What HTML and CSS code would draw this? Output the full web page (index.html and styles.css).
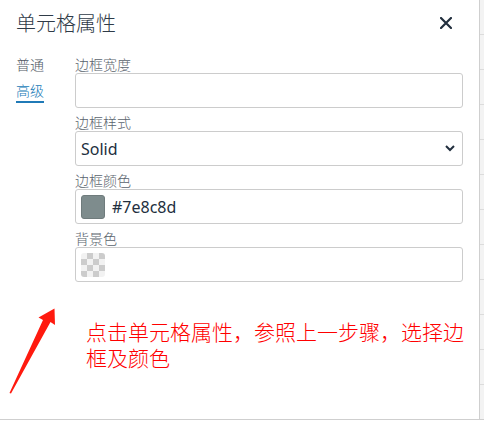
FILE: index.html
```html
<!DOCTYPE html>
<html lang="zh-CN">
<head>
<meta charset="utf-8">
<title>单元格属性</title>
<link rel="stylesheet" href="styles.css">
</head>
<body>
<div class="page">
  <div class="dialog">
    <header class="dlg-head">
      <h1 class="dlg-title">单元格属性</h1>
      <button class="dlg-close" type="button" aria-label="关闭">
        <svg width="12" height="12" viewBox="0 0 12 12"><path d="M1 1 L11 11 M11 1 L1 11" stroke="#222f3e" stroke-width="2.2" stroke-linecap="round" fill="none"/></svg>
      </button>
    </header>
    <div class="dlg-body">
      <nav class="tabs">
        <span class="tab">普通</span>
        <span class="tab tab-active">高级</span>
      </nav>
      <div class="form">
        <div class="field">
          <label class="label">边框宽度</label>
          <div class="input"></div>
        </div>
        <div class="field">
          <label class="label">边框样式</label>
          <div class="input select">
            <span class="value">Solid</span>
            <svg class="chev" width="10" height="7" viewBox="0 0 10 7"><path d="M1 1 L5 5 L9 1" stroke="#222f3e" stroke-width="2" fill="none"/></svg>
          </div>
        </div>
        <div class="field">
          <label class="label">边框颜色</label>
          <div class="input color">
            <span class="swatch swatch-grey"></span>
            <span class="value">#7e8c8d</span>
          </div>
        </div>
        <div class="field">
          <label class="label">背景色</label>
          <div class="input color">
            <span class="swatch swatch-empty"></span>
          </div>
        </div>
      </div>
    </div>
    <div class="note">
      <svg class="arrow" width="60" height="100" viewBox="0 0 60 100">
        <polygon points="54.5,8.5 55,25 50.5,22 11,93.5 9.5,93 43,20 38.5,17.5" fill="#ff1a0f"/>
      </svg>
      <p class="note-text">点击单元格属性，参照上一步骤，选择边框及颜色</p>
    </div>
  </div>
  <div class="strip"></div>
</div>
</body>
</html>
```
FILE: styles.css
```css
* { box-sizing: border-box; }
html, body { margin: 0; padding: 0; background: #fff; }
body {
  font-family: "Noto Sans", "Noto Sans CJK SC", sans-serif;
  color: #222f3e;
}
.page {
  display: flex;
  width: 484px;
  height: 421px;
  overflow: hidden;
}
.dialog {
  width: 480px;
  height: 420px;
  background: #fff;
  border-right: 1px solid #cfcfcf;
  border-bottom: 1px solid #cfcfcf;
  display: flex;
  flex-direction: column;
}
.strip {
  flex: 1;
  height: 420px;
  background: repeating-linear-gradient(to bottom, #f3f3f3 0 34px, #dcdcdc 34px 35px);
  border-bottom: 1px solid #cfcfcf;
}
.dlg-head {
  display: flex;
  align-items: center;
  justify-content: space-between;
  padding: 8px 21px 0 16px;
}
.dlg-title {
  margin: 0;
  font-family: "Noto Sans CJK SC", sans-serif;
  font-weight: 300;
  font-size: 20px;
  line-height: 30px;
  color: #2f3b48;
}
.dlg-close {
  width: 24px;
  height: 24px;
  padding: 0;
  border: 0;
  background: none;
  display: flex;
  align-items: center;
  justify-content: center;
}
.dlg-body {
  display: flex;
  padding: 17px 16px 0 16px;
}
.tabs {
  width: 59px;
  display: flex;
  flex-direction: column;
  align-items: flex-start;
}
.tab {
  font-family: "Noto Sans CJK SC", sans-serif;
  font-weight: 300;
  font-size: 14px;
  line-height: 18px;
  color: #4f5963;
  padding-bottom: 2px;
  border-bottom: 2px solid transparent;
  margin-bottom: 4px;
}
.tab-active {
  color: #207ab7;
  border-bottom-color: #207ab7;
}
.form {
  flex: 1;
  display: flex;
  flex-direction: column;
}
.field {
  display: flex;
  flex-direction: column;
  margin-bottom: 5px;
}
.label {
  font-family: "Noto Sans CJK SC", sans-serif;
  font-weight: 300;
  font-size: 14px;
  line-height: 18px;
  color: #5a636d;
}
.input {
  height: 35px;
  border: 1px solid #cccccc;
  border-radius: 3px;
  background: #fff;
  display: flex;
  align-items: center;
  padding: 0 5px;
}
.value {
  font-family: "Noto Sans", sans-serif;
  font-size: 16px;
  color: #222f3e;
}
.select { justify-content: space-between; padding-right: 7px; }
.color .value { margin-left: 7px; }
.swatch {
  width: 24px;
  height: 24px;
  border-radius: 3px;
  display: block;
}
.swatch-grey {
  background: #7e8c8d;
  border: 1px solid #6f7b7c;
}
.swatch-empty {
  background: repeating-conic-gradient(#cccccc 0 25%, #f2f2f2 0 50%) 0 0 / 12px 12px;
}
.note {
  display: flex;
  align-items: flex-start;
  margin-top: 13px;
}
.arrow { display: block; flex: none; }
.note-text {
  margin: 18px 0 0 26px;
  width: 384px;
  font-family: "Noto Sans CJK SC", sans-serif;
  font-weight: 300;
  font-size: 21px;
  line-height: 26px;
  color: #ff0000;
}
```
